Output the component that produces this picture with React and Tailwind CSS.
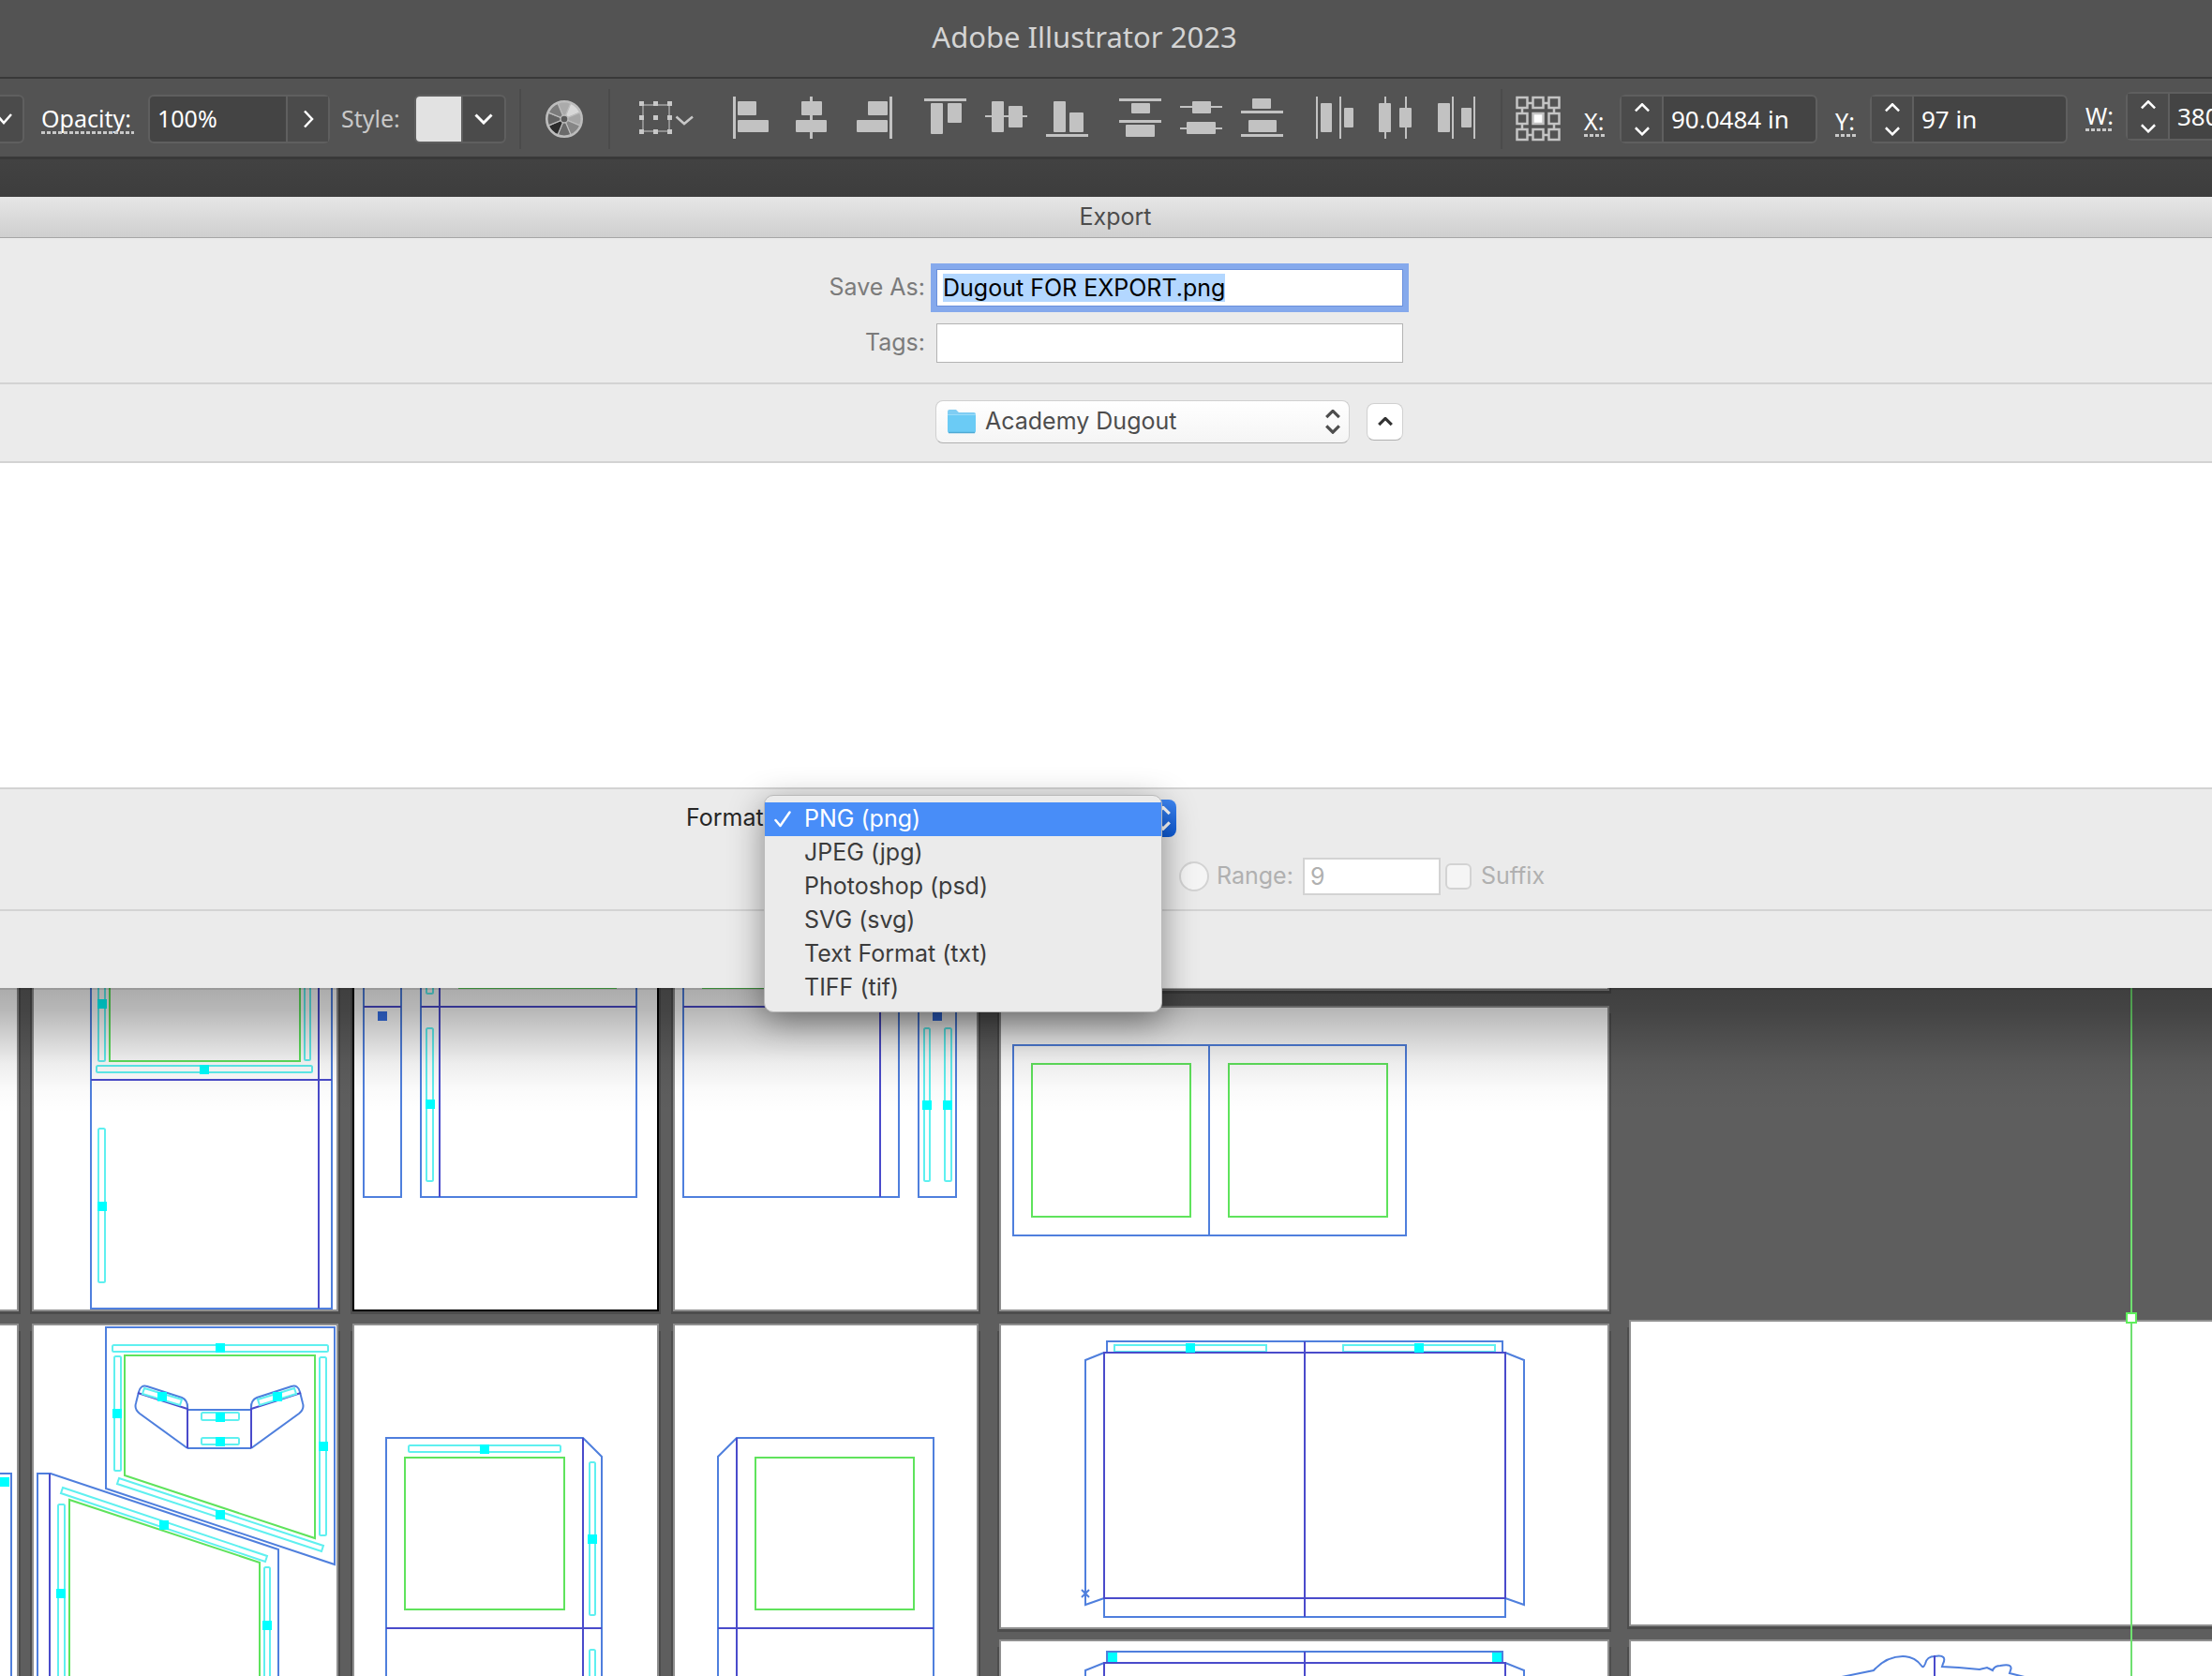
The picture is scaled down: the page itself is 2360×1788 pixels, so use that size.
import { useEffect, useRef } from "react";

const BLUE = "#4f7fdd";
const PURPLE = "#4a4bcb";
const CYAN = "#5ff0f0";
const GREEN = "#5fe35c";

function Chevron({ dir = "down", className = "h-2.5 w-5", width = 3 }) {
  const d = {
    down: "M1.5 1.5 L10 10 L18.5 1.5",
    up: "M1.5 10 L10 1.5 L18.5 10",
  }[dir];
  return (
    <svg viewBox="0 0 20 12" className={className} fill="none" stroke="currentColor" strokeWidth={width} aria-hidden="true">
      <path d={d} />
    </svg>
  );
}

/* ---------- Control bar ---------- */

function FieldLabel({ htmlFor, className = "", children }) {
  return (
    <label htmlFor={htmlFor} className={`flex shrink-0 flex-col text-[25px] leading-7 whitespace-nowrap text-white ${className}`}>
      <span>{children}</span>
      <span className="h-[3px] bg-[repeating-linear-gradient(90deg,#c8c8c8_0px,#c8c8c8_4px,transparent_4px,transparent_6px)]" />
    </label>
  );
}

function Stepper({ id, label, value, raised = false, widths }) {
  return (
    <div className={`flex shrink-0 items-center ${raised ? "pb-1.5" : ""}`}>
      <FieldLabel htmlFor={id} className={`${widths} ${raised ? "" : "pt-1.5"}`}>{label}</FieldLabel>
      <div className="ml-[15px] flex h-[52px] w-[211px] rounded-md border-2 border-[#5f5f5f] bg-[#444444]">
        <div className="flex w-[45px] flex-col items-center justify-center gap-[15px] border-r-2 border-[#5f5f5f] bg-[#4b4b4b] text-white">
          <button aria-label={`Increase ${label}`} className="flex"><Chevron dir="up" /></button>
          <button aria-label={`Decrease ${label}`} className="flex"><Chevron /></button>
        </div>
        <input id={id} defaultValue={value} className="w-0 min-w-0 flex-1 bg-transparent pl-2 text-[26px] text-white outline-none" />
      </div>
    </div>
  );
}

const ALIGN_GROUPS = [
  [
    ["Align left", [[4, 0, 3, 45], [9, 5, 20, 15], [9, 25, 33, 13]]],
    ["Align horizontal center", [[21, 0, 3, 45], [12, 5, 22, 15], [6, 25, 33, 13]]],
    ["Align right", [[41, 0, 3, 45], [18, 5, 21, 15], [6, 25, 33, 13]]],
  ],
  [
    ["Align top", [[0, 2, 45, 3], [7, 7, 13, 33], [25, 7, 15, 21]]],
    ["Align vertical center", [[0, 20, 45, 2], [7, 5, 13, 33], [25, 10, 15, 23]]],
    ["Align bottom", [[0, 40, 45, 3], [8, 5, 13, 33], [25, 17, 15, 21]]],
  ],
  [
    ["Distribute top", [[0, 2, 45, 3], [13, 7, 20, 11], [0, 25, 45, 3], [7, 30, 31, 13]]],
    ["Distribute vertical center", [[0, 10, 45, 2], [13, 5, 20, 13], [0, 33, 45, 2], [7, 27, 31, 13]]],
    ["Distribute bottom", [[0, 15, 45, 3], [12, 2, 20, 11], [0, 40, 45, 3], [8, 25, 30, 13]]],
  ],
  [
    ["Distribute left", [[2, 0, 2, 45], [7, 7, 12, 31], [27, 0, 2, 45], [32, 12, 10, 21]]],
    ["Distribute horizontal center", [[10, 0, 2, 45], [4, 7, 13, 31], [32, 0, 2, 45], [26, 12, 13, 21]]],
    ["Distribute right", [[17, 0, 2, 45], [2, 7, 13, 31], [40, 0, 2, 45], [27, 12, 11, 21]]],
  ],
];

function Separator({ className }) {
  return <div className={`h-16 w-0.5 shrink-0 bg-[#4b4b4b] ${className}`} />;
}

function ColorWheel() {
  const fills = ["#ababab", "#d8d8d8", "#a6a6a6", "#868686", "#6a6a6a", "#2c2c2c", "#636363", "#7b7b7b"];
  const pt = (deg, r) => {
    const a = ((deg - 90) * Math.PI) / 180;
    return `${20 + r * Math.cos(a)} ${20 + r * Math.sin(a)}`;
  };
  return (
    <svg viewBox="0 0 40 40" className="size-10" aria-hidden="true">
      {fills.map((f, i) => (
        <path key={i} d={`M20 20 L${pt(i * 45 - 22.5, 18)} A18 18 0 0 1 ${pt(i * 45 + 22.5, 18)} Z`} fill={f} stroke="#bdbdbd" strokeWidth="1.2" />
      ))}
      <circle cx="20" cy="20" r="19" fill="none" stroke="#bdbdbd" strokeWidth="2" />
      <circle cx="20" cy="20" r="4" fill="#5a5a5a" stroke="#bdbdbd" strokeWidth="1.4" />
    </svg>
  );
}

function ReferencePoint() {
  const xs = [1, 18, 35];
  return (
    <svg viewBox="0 0 48 50" className="h-[50px] w-12" fill="none" stroke="#c4c4c4" strokeWidth="2.5" aria-hidden="true">
      <path d="M13 8 H18 M30 8 H35 M13 42 H18 M30 42 H35 M7 14 V19 M7 31 V36 M41 14 V19 M41 31 V36" />
      {xs.map((x) => xs.map((y) => (
        <rect key={`${x}-${y}`} x={x + 0.5} y={y + 1} width="11" height="11" fill={x === 18 && y === 18 ? "#ffffff" : "none"} />
      )))}
    </svg>
  );
}

function ControlBar() {
  return (
    <div className="flex h-[88px] items-center overflow-hidden border-t-2 border-b-3 border-[#393939] bg-[#535353] pt-[3px]">
      <button aria-label="Stroke profile" className="flex h-[52px] w-[26px] shrink-0 items-center rounded-r-md border-2 border-l-0 border-[#5f5f5f] bg-[#4b4b4b] text-white">
        <svg viewBox="0 0 14 12" className="h-3 w-3.5" fill="none" stroke="currentColor" strokeWidth="2.5" aria-hidden="true"><path d="M-4 1 L4 10 L12 1" /></svg>
      </button>
      <FieldLabel htmlFor="opacity" className="ml-[18px] w-[99px]">Opacity:</FieldLabel>
      <div className="ml-[15px] flex h-[52px] w-[194px] shrink-0 rounded-md border-2 border-[#5f5f5f] bg-[#444444]">
        <input id="opacity" defaultValue="100%" className="w-0 min-w-0 flex-1 bg-transparent pl-2 text-[25px] text-white outline-none" />
        <button aria-label="Opacity slider" className="flex w-[45px] items-center justify-center border-l-2 border-[#5f5f5f] bg-[#4b4b4b] text-white">
          <svg viewBox="0 0 12 20" className="h-5 w-3" fill="none" stroke="currentColor" strokeWidth="2.5" aria-hidden="true"><path d="M2 1.5 L10 10 L2 18.5" /></svg>
        </button>
      </div>
      <span className="ml-3 w-[64px] shrink-0 text-[25px] whitespace-nowrap text-[#c8c8c8]">Style:</span>
      <button aria-label="Graphic style" className="ml-3.5 flex h-[52px] w-[98px] shrink-0 overflow-hidden rounded-md border-2 border-[#5f5f5f] bg-[#4b4b4b] text-white">
        <span className="h-full w-12 bg-[#e2e2e2]" />
        <span className="flex h-full flex-1 items-center justify-center border-l-2 border-[#5f5f5f]"><Chevron className="h-3 w-5" /></span>
      </button>
      <Separator className="ml-3.5" />
      <button aria-label="Recolor artwork" className="ml-[26px] shrink-0"><ColorWheel /></button>
      <Separator className="ml-[27px]" />
      <button aria-label="Transform" className="ml-[31px] shrink-0">
        <svg viewBox="0 0 58 38" className="h-[38px] w-[58px]" aria-hidden="true">
          <rect x="4" y="4" width="28" height="28" fill="none" stroke="#8f8f8f" strokeWidth="2" />
          <path fill="#c8c8c8" d="M0 0h5v5H0z M15 0h5v5h-5z M30 0h5v5h-5z M0 15h5v5H0z M15 15h5v5h-5z M30 15h5v5h-5z M0 30h5v5H0z M15 30h5v5h-5z M30 30h5v5h-5z" />
          <path d="M39.500 16.500 L48 24 L57 16.500" fill="none" stroke="#c8c8c8" strokeWidth="2.500" />
        </svg>
      </button>
      <div className="ml-[38px] flex shrink-0 gap-[33px]">
        {ALIGN_GROUPS.map((group, i) => (
          <div key={i} className="flex gap-5">
            {group.map(([name, rects]) => (
              <button key={name} aria-label={name}>
                <svg viewBox="0 0 45 48" className="h-12 w-[45px]" fill="#c2c2c2" aria-hidden="true">
                  {rects.map(([x, y, w, h], j) => <rect key={j} x={x} y={y} width={w} height={h} rx={Math.min(w, h) > 5 ? 1 : 0} />)}
                </svg>
              </button>
            ))}
          </div>
        ))}
      </div>
      <Separator className="ml-6" />
      <button aria-label="Reference point" className="mr-[25px] ml-3.5 shrink-0"><ReferencePoint /></button>
      <div className="flex gap-[19px]">
        <Stepper id="pos-x" label="X:" value="90.0484 in" widths="w-[23px]" />
        <Stepper id="pos-y" label="Y:" value="97 in" widths="w-[22px]" />
        <Stepper id="size-w" label="W:" value="380 in" widths="w-[28px]" raised />
      </div>
    </div>
  );
}

/* ---------- Export sheet ---------- */

function Folder() {
  return (
    <svg viewBox="0 0 30 26" className="h-[26px] w-[30px]" aria-hidden="true">
      <path d="M0 2 Q0 0 2 0 H9 L12 3 H28 Q30 3 30 5 V8 H0 Z" fill="#7fcdf3" />
      <path d="M0 5 H30 V23 Q30 25 28 25 H2 Q0 25 0 23 Z" fill="#6bcbf5" />
      <path d="M1 24.500 H29" stroke="#4fa9d4" strokeWidth="1.500" />
      <path d="M0 5.500 H30" stroke="#9bdcf9" strokeWidth="1" />
    </svg>
  );
}

const FORMATS = ["PNG (png)", "JPEG (jpg)", "Photoshop (psd)", "SVG (svg)", "Text Format (txt)", "TIFF (tif)"];

function FormatMenu() {
  return (
    <ul role="listbox" aria-label="Format" className="absolute -top-[5px] -left-[13px] z-20 w-[425px] rounded-[10px] border border-[#b9b9b9] bg-[#ebebeb] py-[7px] shadow-[0_10px_36px_rgba(0,0,0,0.42)]">
      {FORMATS.map((name, i) => (
        <li
          key={name}
          role="option"
          aria-selected={i === 0}
          className={`flex h-9 items-center pl-2.5 ${i === 0 ? "bg-[#488df8] text-white" : "text-[#3c3c3c]"}`}
        >
          <span className="flex w-8">
            {i === 0 && (
              <svg viewBox="0 0 18 18" className="size-[18px]" fill="none" stroke="currentColor" strokeWidth="2.500" strokeLinecap="round" strokeLinejoin="round" aria-hidden="true">
                <path d="M1.500 10 L6.500 16 L16.500 1.500" />
              </svg>
            )}
          </span>
          {name}
        </li>
      ))}
    </ul>
  );
}

function ExportSheet() {
  const nameRef = useRef(null);
  useEffect(() => {
    nameRef.current.focus({ preventScroll: true });
    nameRef.current.select();
  }, []);

  return (
    <section aria-label="Export" className="relative z-10 bg-[#ebebeb] font-['Inter',sans-serif] text-[25px] shadow-[0_2px_0_rgba(0,0,0,0.1)]">
      <h2 className="flex h-11 items-center justify-center border-b border-[#a6a6a6] bg-linear-to-b from-[#e6e6e6] to-[#cfcfcf] pl-5 text-[#4c4c4c]">Export</h2>

      <div className="flex flex-col items-center gap-[18px] border-b-2 border-[#d3d3d3] pt-[33px] pb-[21px] pl-5">
        <div className="flex h-10 w-[614px] items-center justify-end gap-3">
          <label htmlFor="save-as" className="whitespace-nowrap text-[#7b7b7b]">Save As:</label>
          <input
            id="save-as"
            ref={nameRef}
            defaultValue="Dugout FOR EXPORT.png"
            className="h-10 w-[498px] shrink-0 border border-[#6a90dc] bg-white px-1.5 leading-8 text-black ring-6 ring-[#85a9ec] outline-none selection:bg-[#b3d7ff] selection:text-black"
          />
        </div>
        <div className="flex h-[42px] w-[614px] items-center justify-end gap-3">
          <label htmlFor="tags" className="text-[#7b7b7b]">Tags:</label>
          <input id="tags" className="h-[42px] w-[498px] shrink-0 border border-[#b3b3b3] bg-white px-1.5" />
        </div>
      </div>

      <div className="flex justify-center border-b-2 border-[#d3d3d3] pt-[17px] pb-[19px] pl-5">
        <div className="flex h-[46px] w-[614px] items-center justify-end gap-[18px]">
          <div className="relative h-full w-[442px]">
            <select aria-label="Folder" className="h-full w-full appearance-none rounded-lg border border-[#d0d0d0] border-b-[#b0b0b0] bg-linear-to-b from-white to-[#f5f5f5] pl-[52px] text-[#4d4d4d]">
              <option>Academy Dugout</option>
            </select>
            <span className="pointer-events-none absolute inset-y-0 left-[13px] flex items-center"><Folder /></span>
            <span className="pointer-events-none absolute inset-y-0 right-2.5 flex flex-col items-center justify-center gap-1.5 text-[#4d4d4d]">
              <Chevron dir="up" className="h-[10px] w-4" width={4} />
              <Chevron className="h-[10px] w-4" width={4} />
            </span>
          </div>
          <button aria-label="Collapse browser" className="flex h-10 w-[39px] items-center justify-center rounded-lg border border-[#d0d0d0] border-b-[#b0b0b0] bg-white text-[#333333]">
            <Chevron dir="up" className="h-2.5 w-4" width={4} />
          </button>
        </div>
      </div>

      <div className="h-[346px] bg-white" />

      <div className="flex flex-col items-center gap-[22px] border-y-2 border-[#d3d3d3] pt-[11px] pb-[15px] pl-5">
        <div className="flex h-10 w-[916px] items-center">
          <label htmlFor="format" className="w-24 shrink-0 text-[#262626]">Format:</label>
          <div className="relative h-10 w-[427px]">
            <select id="format" className="h-full w-full appearance-none rounded-lg bg-linear-to-b from-[#3d87f5] to-[#0a5ad6] text-transparent">
              {FORMATS.map((name) => <option key={name}>{name}</option>)}
            </select>
            <span className="pointer-events-none absolute inset-y-0 right-1.5 flex flex-col justify-center gap-1.5 text-white">
              <Chevron dir="up" className="h-2.5 w-4" width={4} />
              <Chevron className="h-2.5 w-4" width={4} />
            </span>
            <FormatMenu />
          </div>
        </div>
        <div className="flex h-10 w-[916px] items-center justify-end text-[#b0b0b0]">
          <input id="range-on" type="radio" disabled className="size-8 shrink-0 appearance-none rounded-full border-2 border-[#d3d3d3] bg-[#f5f5f5]" />
          <label htmlFor="range-on" className="ml-2 w-[82px] shrink-0 whitespace-nowrap">Range:</label>
          <input aria-label="Range" disabled defaultValue="9" className="ml-2.5 h-10 w-[147px] shrink-0 border-2 border-[#d3d3d3] bg-white pl-1.5" />
          <input id="suffix" type="checkbox" disabled className="ml-[5px] size-7 shrink-0 appearance-none rounded-md border-2 border-[#d3d3d3] bg-[#f5f5f5]" />
          <label htmlFor="suffix" className="ml-2.5 w-[68px] shrink-0">Suffix</label>
        </div>
      </div>

      <div className="h-[82px]" />
    </section>
  );
}

/* ---------- Artwork ---------- */

function Board({ x, y, w, h, active = false }) {
  return (
    <g>
      <rect x={x - 2} y={y + 8} width={w + 4} height={h - 5} fill="#4d4d4d" />
      <rect x={x} y={y} width={w} height={h} fill={active ? "#000000" : "#8f8f8f"} />
      <rect x={x + 2} y={y + 2} width={w - 4} height={h - 4} fill="#ffffff" />
    </g>
  );
}

const Slot = ({ x, y, w, h }) => <rect x={x} y={y} width={w} height={h} rx="1.500" stroke={CYAN} />;
const Node = ({ x, y, color = "#00ffff" }) => <rect x={x} y={y} width="10" height="10" fill={color} stroke="none" />;

function Canvas() {
  return (
    <svg viewBox="0 1054 2360 734" className="block h-auto w-full bg-[#5e5e5e]" fill="none" strokeWidth="2" role="img" aria-label="Artboards">
      <defs>
        <linearGradient id="sheet-shadow" x1="0" y1="0" x2="0" y2="1">
          <stop offset="0" stopColor="#000" stopOpacity="0.33" />
          <stop offset="0.180" stopColor="#000" stopOpacity="0.28" />
          <stop offset="0.400" stopColor="#000" stopOpacity="0.17" />
          <stop offset="0.600" stopColor="#000" stopOpacity="0.07" />
          <stop offset="0.800" stopColor="#000" stopOpacity="0.02" />
          <stop offset="1" stopColor="#000" stopOpacity="0" />
        </linearGradient>
      </defs>

      <Board x={-300} y={1000} w={320} h={399} />
      <Board x={34} y={1000} w={327} h={399} />
      <Board x={376} y={1000} w={327} h={399} active />
      <Board x={718} y={1000} w={326} h={399} />
      <Board x={1066} y={900} w={651} h={157} />
      <Board x={1066} y={1073} w={651} h={326} />
      <Board x={-300} y={1412} w={320} h={500} />
      <Board x={34} y={1412} w={327} h={500} />
      <Board x={376} y={1412} w={327} h={500} />
      <Board x={718} y={1412} w={326} h={500} />
      <Board x={1066} y={1412} w={651} h={326} />
      <Board x={1066} y={1749} w={651} h={300} />
      <Board x={1738} y={1408} w={800} h={327} />
      <Board x={1738} y={1749} w={800} h={300} />

      {/* side panel */}
      <g>
        <path d="M97 1040 V1396 H354 V1040" stroke={BLUE} />
        <path d="M97 1152 H354 M340 1040 V1396" stroke={PURPLE} />
        <path d="M117 1040 V1132 H320 V1040" stroke={GREEN} />
        <Slot x={105} y={1020} w={7} h={112} />
        <Slot x={325} y={1020} w={6} h={111} />
        <Slot x={103} y={1137} w={230} h={7} />
        <Slot x={105} y={1204} w={7} h={164} />
        <Node x={104} y={1066} />
        <Node x={213} y={1136} />
        <Node x={104} y={1282} />
      </g>

      {/* narrow panels */}
      <g>
        <path d="M388 1040 V1277 H428 V1040 M449 1040 V1277 H679 V1040" stroke={BLUE} />
        <path d="M388 1074 H428 M449 1074 H679 M469 1040 V1277" stroke={PURPLE} />
        <path d="M489 1054 H658" stroke={GREEN} />
        <Slot x={455} y={1020} w={7} h={40} />
        <Slot x={455} y={1097} w={7} h={163} />
        <Node x={454} y={1173} />
        <Node x={403} y={1079} color="#356fe6" />
      </g>
      <g>
        <path d="M729 1040 V1277 H959 V1040 M980 1040 V1277 H1020 V1040" stroke={BLUE} />
        <path d="M729 1074 H959 M980 1074 H1020 M939 1040 V1277" stroke={PURPLE} />
        <path d="M749 1054 H919" stroke={GREEN} />
        <Slot x={986} y={1097} w={6} h={163} />
        <Slot x={1008} y={1097} w={7} h={163} />
        <Node x={984} y={1174} />
        <Node x={1006} y={1174} />
        <Node x={995} y={1079} color="#356fe6" />
      </g>

      {/* double window */}
      <g>
        <path d="M1081 1115 H1500 V1318 H1081 Z M1290 1115 V1318" stroke={BLUE} />
        <path d="M1101 1135 H1270 V1298 H1101 Z M1311 1135 H1480 V1298 H1311 Z" stroke={GREEN} />
      </g>

      {/* sloped panels */}
      <g>
        <path d="M113 1416 H357 V1669 L113 1588 Z" stroke={BLUE} />
        <path d="M133 1446 H336 V1641 L133 1574 Z" stroke={GREEN} />
        <Slot x={120} y={1435} w={230} h={7} />
        <Slot x={122} y={1447} w={7} h={122} />
        <Slot x={341} y={1448} w={7} h={190} />
        <path d="M127 1577 L345 1649 L343 1655 L125 1583 Z" stroke={CYAN} />
        <Node x={230} y={1433} />
        <Node x={120} y={1503} />
        <Node x={340} y={1538} />
        <Node x={230} y={1611} />

        <path d="M40 1800 V1572 H54 L297 1653 V1800" stroke={BLUE} />
        <path d="M53 1572 V1800" stroke={PURPLE} />
        <path d="M74 1800 V1600 L277 1667 V1800" stroke={GREEN} />
        <path d="M67 1587 L285 1660 L283 1666 L65 1593 Z" stroke={CYAN} />
        <Slot x={62} y={1605} w={7} h={220} />
        <Slot x={282} y={1672} w={6} h={160} />
        <Node x={170} y={1622} />
        <Node x={60} y={1695} />
        <Node x={280} y={1729} />

        <path d="M-10 1572 H12 V1800" stroke={BLUE} />
        <Node x={0} y={1576} />
      </g>

      {/* winged bracket */}
      <g>
        <path d="M200 1504 H268 M200 1545 H268" stroke={BLUE} />
        <path d="M200 1545 L149 1508 Q143 1503 145 1497 L148 1485 Q150 1477 157 1479 L194 1491 Q201 1494 200 1504" stroke={BLUE} />
        <path d="M268 1545 L319 1508 Q325 1503 323 1497 L320 1485 Q318 1477 311 1479 L274 1491 Q267 1494 268 1504" stroke={BLUE} />
        <path d="M200 1545 V1503 L147 1486 M268 1545 V1503 L321 1486" stroke={PURPLE} />
        <path d="M154 1481 L194 1493 L192 1499 L152 1487 Z M314 1481 L275 1493 L277 1499 L316 1487 Z" stroke={CYAN} />
        <Slot x={215} y={1507} w={40} h={8} />
        <Slot x={215} y={1534} w={40} h={7} />
        <Node x={168} y={1485} />
        <Node x={291} y={1485} />
        <Node x={230} y={1507} />
        <Node x={230} y={1533} />
      </g>

      {/* end panels */}
      <g>
        <path d="M412 1800 V1534 H622 L642 1554 V1800" stroke={BLUE} />
        <path d="M622 1534 V1800 M412 1737 H642" stroke={PURPLE} />
        <path d="M432 1555 H602 V1717 H432 Z" stroke={GREEN} />
        <Slot x={436} y={1542} w={162} h={7} />
        <Slot x={629} y={1560} w={6} h={163} />
        <Slot x={629} y={1760} w={6} h={60} />
        <Node x={512} y={1541} />
        <Node x={627} y={1637} />
      </g>
      <g>
        <path d="M766 1800 V1554 L786 1534 H996 V1800" stroke={BLUE} />
        <path d="M786 1534 V1800 M766 1737 H996" stroke={PURPLE} />
        <path d="M806 1555 H975 V1717 H806 Z" stroke={GREEN} />
      </g>

      {/* roof panels */}
      <g>
        <path d="M1181 1443 V1431 H1603 V1443 M1178 1705 V1725 H1606 V1705" stroke={BLUE} />
        <path d="M1178 1443 L1158 1451 V1712 L1178 1705 M1606 1443 L1626 1451 V1712 L1606 1705" stroke={BLUE} />
        <path d="M1154 1696 L1162 1704 M1162 1696 L1154 1704" stroke={BLUE} />
        <rect x="1189" y="1435" width="162" height="7" stroke={CYAN} />
        <rect x="1433" y="1435" width="162" height="7" stroke={CYAN} />
        <path d="M1178 1443 H1606 V1705 H1178 Z M1392 1431 V1725" stroke={PURPLE} />
        <Node x={1265} y={1433} />
        <Node x={1509} y={1433} />
      </g>
      <g>
        <path d="M1181 1774 V1762 H1603 V1774" stroke={BLUE} />
        <path d="M1178 1774 L1158 1782 V1800 M1606 1774 L1626 1782 V1800" stroke={BLUE} />
        <path d="M1178 1800 V1774 H1606 V1800 M1392 1762 V1800" stroke={PURPLE} />
        <Node x={1182} y={1763} />
        <Node x={1592} y={1763} />
      </g>

      {/* silhouette */}
      <path
        d="M1960 1790 L1999 1782 C2010 1770 2022 1767 2030 1767 C2042 1767 2047 1773 2050 1777 Q2052 1780 2054 1775 C2055 1770 2059 1767 2064 1767 C2074 1765 2076 1769 2073 1775 L2072 1778 L2090 1779 L2112 1781 L2120 1779 L2126 1782 Q2128 1777 2134 1777 C2144 1775 2147 1777 2145 1782 L2144 1785 L2160 1789"
        stroke={BLUE}
      />
      <path d="M2064 1766 V1800" stroke={PURPLE} />

      {/* guide */}
      <path d="M2274 1040 V1800" stroke="#6fe070" />
      <rect x="2269" y="1401" width="10" height="10" fill="#ffffff" stroke="#5fee5c" />

      <rect x="0" y="1054" width="2360" height="134" fill="url(#sheet-shadow)" />
    </svg>
  );
}

export default function App() {
  return (
    <main className="overflow-hidden bg-[#5e5e5e] font-['Noto_Sans',sans-serif]">
      <header>
        <h1 className="flex h-[82px] items-center justify-center bg-[#535353] pr-[46px] pb-1 text-[31px] text-[#d4d4d4]">Adobe Illustrator 2023</h1>
        <ControlBar />
        <div className="h-10 bg-linear-to-b from-[#424242] to-[#3d3d3d]" />
      </header>
      <ExportSheet />
      <Canvas />
    </main>
  );
}
